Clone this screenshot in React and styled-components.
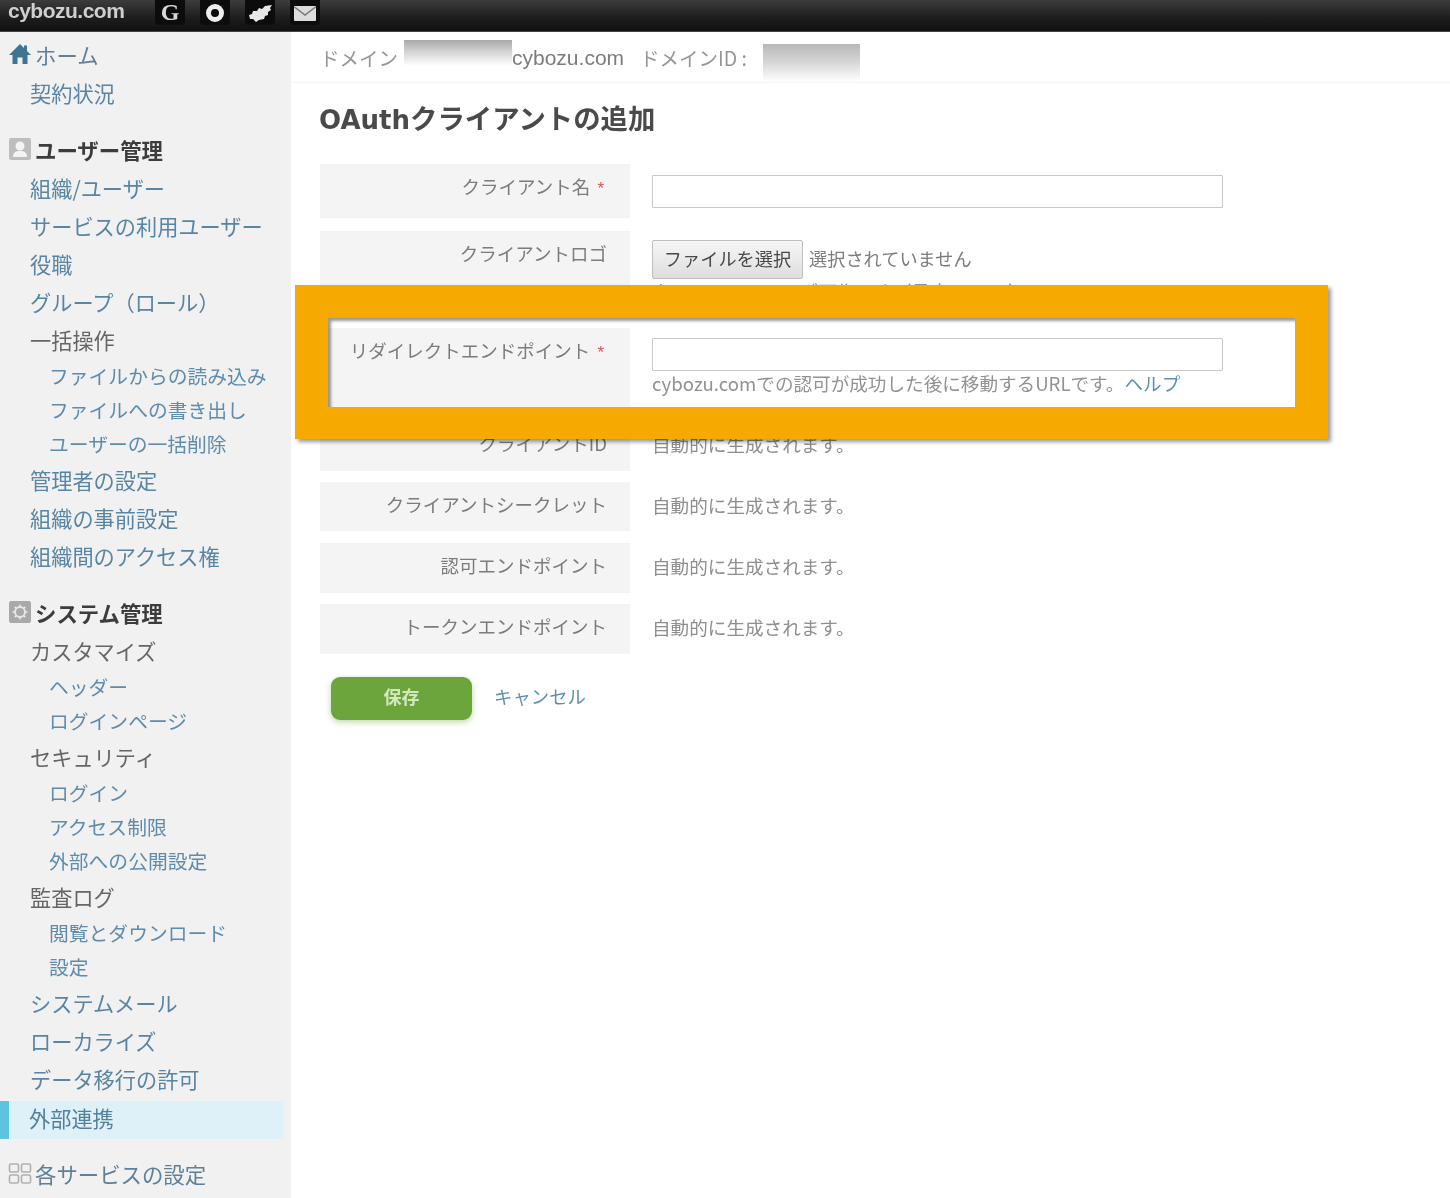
import React from "react";
import styled, { createGlobalStyle } from "styled-components";

const Global = createGlobalStyle`
  html, body { margin: 0; padding: 0; background: #fff; }
  * { box-sizing: border-box; }
  body { font-family: "Liberation Sans", "Noto Sans CJK JP", sans-serif; }
`;

const Page = styled.div`
  position: relative;
  width: 1450px;
  height: 1198px;
  overflow: hidden;
  background: #fff;
`;

const Header = styled.header`
  height: 32px;
  display: flex;
  align-items: flex-start;
  background: linear-gradient(#3c3c3c, #1c1c1c 60%, #111);
  border-bottom: 1px solid #444;
  filter: blur(0.7px);
`;

const Logo = styled.div`
  width: 155px;
  padding: 0 0 0 8px;
  height: 24px;
  line-height: 22px;
  font-size: 21px;
  font-weight: 700;
  color: #cfcfcf;
  letter-spacing: -0.5px;
`;

const HeaderIcons = styled.div`
  display: flex;
  gap: 15px;
`;

const HeaderIcon = styled.div`
  width: 30px;
  height: 25px;
  background: #0c0c0c;
  border-radius: 0 0 4px 4px;
  display: flex;
  align-items: center;
  justify-content: center;
  color: #d8d8d8;
  font: 700 24px/25px "Liberation Serif", serif;
`;

const Body = styled.div`
  display: grid;
  grid-template-columns: 291px 1fr;
  height: 1166px;
`;

const Sidebar = styled.nav`
  background: #f1f1f1;
  padding-top: 4px;
  overflow: hidden;
  filter: blur(0.7px);
  font-family: "Noto Sans CJK JP", sans-serif;
`;

const Section = styled.section`
  margin-bottom: 19px;
`;

const Heading = styled.div`
  height: 38px;
  padding: 0 0 2px 8px;
  display: flex;
  align-items: center;
  gap: 3px;
  font-size: 21.4px;
  font-weight: ${(p) => (p.$light ? 400 : 700)};
  color: ${(p) => (p.$light ? "#5f8097" : "#3c3c3c")};
  white-space: nowrap;
`;

const Item = styled.div`
  height: 38px;
  line-height: 38px;
  padding-left: 30px;
  font-size: 21.2px;
  white-space: nowrap;
  color: ${(p) => (p.$plain ? "#666" : "#5885a3")};
`;

const ActiveItem = styled(Item)`
  width: 283px;
  margin: 3px 0 -3px;
  background: #dff1f8;
  border-left: 9px solid #5dc4df;
  padding-left: 20px;
  line-height: 33px;
  color: #55809c;
`;

const SubItem = styled.div`
  height: 34px;
  line-height: 33px;
  padding-left: 49px;
  font-size: 19.8px;
  white-space: nowrap;
  color: #5f8cab;
`;

const Main = styled.main`
  filter: blur(0.7px);
  font-family: "Noto Sans CJK JP", sans-serif;
`;

const DomainBar = styled.div`
  height: 51px;
  padding: 7px 0 0 29px;
  display: flex;
  align-items: flex-start;
  border-bottom: 1px solid #f6f6f6;
  font-size: 19.5px;
  line-height: 38px;
  color: #969696;
  white-space: nowrap;
`;

const DomainName = styled.span`
  font-family: "Liberation Sans", sans-serif;
  font-size: 21px;
  color: #7c7c7c;
  margin-right: 16px;
`;

const Redact = styled.span`
  display: block;
  width: ${(p) => p.$w}px;
  height: ${(p) => p.$h}px;
  margin: ${(p) => p.$m};
  background: linear-gradient(${(p) => p.$from}, #d4d4d4 45%, #fff);
`;

const Content = styled.div`
  padding: 0 0 0 29px;
`;

const Title = styled.h1`
  margin: 0 0 0 -1px;
  padding-top: 16px;
  height: 81px;
  font-size: 27.4px;
  line-height: 36px;
  font-weight: 700;
  color: #4a4a4a;
  white-space: nowrap;
`;

const TitleLatin = styled.span`
  font-family: "DejaVu Sans", sans-serif;
  font-size: 26px;
`;

const Row = styled.div`
  display: grid;
  grid-template-columns: 310px 1fr;
  column-gap: 22px;
  min-height: ${(p) => p.$h}px;
  margin-bottom: ${(p) => p.$gap ?? 12}px;
`;

const Label = styled.div`
  background: #f4f4f4;
  text-align: right;
  padding: 10px 23px 0 0;
  font-size: 18.5px;
  line-height: 25px;
  color: #7c7c7c;
  white-space: nowrap;
`;

const Required = styled.span`
  color: #d9534f;
  margin: 0 3px 0 7px;
  font-family: "Liberation Sans", sans-serif;
  font-size: 17px;
`;

const Cell = styled.div`
  padding-top: ${(p) => p.$top ?? 0}px;
  font-size: 18.6px;
  color: #8e8e8e;
`;

const TextInput = styled.input`
  display: block;
  width: 571px;
  height: 33px;
  background: #fff;
  border: 1.5px solid #c8c8c8;
  border-radius: 1px;
`;

const FileLine = styled.div`
  display: flex;
  align-items: center;
  gap: 6px;
  color: #7c7c7c;
  font-size: 18.2px;
`;

const FileStatus = styled.span`
  padding-bottom: 4px;
`;

const FileButton = styled.button`
  width: 151px;
  height: 39px;
  padding: 0 0 4px;
  background: linear-gradient(#f6f6f6, #dedede);
  border: 1px solid #c0c0c0;
  border-radius: 2px;
  font: 400 18.2px "Noto Sans CJK JP", sans-serif;
  color: #484848;
  white-space: nowrap;
`;

const Help = styled.div`
  font-size: 18.6px;
  line-height: 24px;
  color: #929292;
  white-space: nowrap;
`;

const Link = styled.a`
  color: #5d90b0;
`;

const Plain = styled.div`
  line-height: 25px;
`;

const Actions = styled.div`
  display: flex;
  align-items: center;
  gap: 22px;
  margin: 23px 0 0 11px;
`;

const SaveButton = styled.button`
  width: 141px;
  height: 43px;
  padding: 0 0 6px;
  background: #6ba53c;
  border: 0;
  border-radius: 9px;
  box-shadow: 0 2px 6px rgba(107, 165, 60, 0.45);
  font: 700 18px "Noto Sans CJK JP", sans-serif;
  color: #d4e8c0;
`;

const Cancel = styled.a`
  padding-bottom: 5px;
  font-size: 18.4px;
  color: #5d90b0;
`;

const Highlight = styled.div`
  position: absolute;
  left: 295px;
  top: 285px;
  width: 1033px;
  height: 154px;
  border: solid #f6a900;
  border-width: 33px 33px 32px 33px;
  box-shadow: 3px 3px 4px rgba(0, 0, 0, 0.4), inset 3px 3px 3px rgba(0, 0, 0, 0.4);
`;

const HomeIcon = () => (
  <svg width="24" height="24" viewBox="0 0 24 24">
    <path d="M12 2 L16 6 V3.5 H19 V9 L23 13 H19.5 V22 H14.5 V15.5 H9.5 V22 H4.5 V13 H1 Z" fill="#3f7492" />
  </svg>
);
const UserIcon = () => (
  <svg width="24" height="24" viewBox="0 0 24 24">
    <rect x="1" y="1" width="22" height="22" rx="2" fill="#bdbdbd" />
    <circle cx="12" cy="9" r="4.5" fill="#f4f4f4" />
    <path d="M5 20 C5 15 8 14 12 14 S19 15 19 20 Z" fill="#f4f4f4" />
  </svg>
);
const GearIcon = () => (
  <svg width="24" height="24" viewBox="0 0 24 24">
    <rect x="1" y="1" width="22" height="22" rx="2" fill="#a9a9a9" />
    <circle cx="12" cy="12" r="5" fill="none" stroke="#e6e6e6" strokeWidth="2" />
    <path d="M12 4.5 V7 M12 17 V19.5 M4.5 12 H7 M17 12 H19.5 M6.8 6.8 L8.5 8.5 M15.5 15.5 L17.2 17.2 M6.8 17.2 L8.5 15.5 M15.5 8.5 L17.2 6.8" stroke="#e6e6e6" strokeWidth="1.6" />
  </svg>
);
const GridIcon = () => (
  <svg width="24" height="24" viewBox="0 0 24 24" fill="none" stroke="#b0b0b0" strokeWidth="1.6">
    <rect x="1.5" y="3" width="9" height="8" rx="1.5" />
    <rect x="13.5" y="3" width="9" height="8" rx="1.5" />
    <rect x="1.5" y="14" width="9" height="8" rx="1.5" />
    <rect x="13.5" y="14" width="9" height="8" rx="1.5" />
  </svg>
);
const RingIcon = () => (
  <svg width="24" height="24" viewBox="0 0 24 24">
    <circle cx="12" cy="12" r="6.5" fill="none" stroke="#ededed" strokeWidth="5" />
  </svg>
);
const CloudIcon = () => (
  <svg width="26" height="20" viewBox="0 0 26 20">
    <path d="M2 12 L5 11 L6 8 L10 8 L12 5 L15 6 L18 3 L25 2 L23 5 L24 7 L21 9 L21 12 L18 13 L17 16 L12 17 L9 19 L6 16 L3 16 Z" fill="#e8e8e8" />
  </svg>
);
const MailIcon = () => (
  <svg width="24" height="20" viewBox="0 0 24 20">
    <rect x="1" y="3" width="22" height="15" rx="1" fill="#dcdcdc" />
    <path d="M1.5 4 L12 12 L22.5 4" fill="none" stroke="#777" strokeWidth="1.5" />
  </svg>
);

const nav = [
  { key: "home", items: [["h", "ホーム", HomeIcon, true], ["i", "契約状況"]] },
  {
    key: "user",
    items: [
      ["h", "ユーザー管理", UserIcon], ["i", "組織/ユーザー"], ["i", "サービスの利用ユーザー"], ["i", "役職"],
      ["i", "グループ（ロール）"], ["p", "一括操作"], ["s", "ファイルからの読み込み"], ["s", "ファイルへの書き出し"],
      ["s", "ユーザーの一括削除"], ["i", "管理者の設定"], ["i", "組織の事前設定"], ["i", "組織間のアクセス権"],
    ],
  },
  {
    key: "system",
    items: [
      ["h", "システム管理", GearIcon], ["p", "カスタマイズ"], ["s", "ヘッダー"], ["s", "ログインページ"], ["p", "セキュリティ"],
      ["s", "ログイン"], ["s", "アクセス制限"], ["s", "外部への公開設定"], ["p", "監査ログ"], ["s", "閲覧とダウンロード"], ["s", "設定"],
      ["i", "システムメール"], ["i", "ローカライズ"], ["i", "データ移行の許可"], ["a", "外部連携"],
    ],
  },
  { key: "svc", items: [["h", "各サービスの設定", GridIcon, true]] },
];

const renderNav = ([kind, text, Icon, light]) => {
  if (kind === "h") return <Heading key={text} $light={light}><Icon />{text}</Heading>;
  if (kind === "s") return <SubItem key={text}>{text}</SubItem>;
  if (kind === "a") return <ActiveItem key={text}>{text}</ActiveItem>;
  return <Item key={text} $plain={kind === "p"}>{text}</Item>;
};

const autoRows = [
  ["クライアントシークレット", 49, 12],
  ["認可エンドポイント", 50, 11],
  ["トークンエンドポイント", 50, 0],
];

export default function App() {
  return (
    <Page>
      <Global />
      <Header>
        <Logo>cybozu.com</Logo>
        <HeaderIcons>
          <HeaderIcon>G</HeaderIcon>
          <HeaderIcon><RingIcon /></HeaderIcon>
          <HeaderIcon><CloudIcon /></HeaderIcon>
          <HeaderIcon><MailIcon /></HeaderIcon>
        </HeaderIcons>
      </Header>
      <Body>
        <Sidebar>
          {nav.map((s) => <Section key={s.key}>{s.items.map(renderNav)}</Section>)}
        </Sidebar>
        <Main>
          <DomainBar>
            ドメイン
            <Redact $w={108} $h={26} $m="1px 0 0 6px" $from="#a8a8a8" />
            <DomainName>cybozu.com</DomainName>
            ドメインID :
            <Redact $w={97} $h={38} $m="5px 0 0 16px" $from="#b8b8b8" />
          </DomainBar>
          <Content>
            <Title><TitleLatin>OAuth</TitleLatin>クライアントの追加</Title>
            <Row $h={54} $gap={13}>
              <Label>クライアント名<Required>*</Required></Label>
              <Cell $top={11}><TextInput /></Cell>
            </Row>
            <Row $h={85}>
              <Label>クライアントロゴ</Label>
              <Cell $top={9}>
                <FileLine>
                  <FileButton>ファイルを選択</FileButton>
                  <FileStatus>選択されていません</FileStatus>
                </FileLine>
                <Help>クライアントのロゴ画像です（最大 200KB）</Help>
              </Cell>
            </Row>
            <Row $h={81}>
              <Label>リダイレクトエンドポイント<Required>*</Required></Label>
              <Cell $top={10}>
                <TextInput />
                <Help>cybozu.comでの認可が成功した後に移動するURLです。<Link>ヘルプ</Link></Help>
              </Cell>
            </Row>
            <Row $h={50} $gap={11}>
              <Label>クライアントID</Label>
              <Cell $top={10}><Plain>自動的に生成されます。</Plain></Cell>
            </Row>
            {autoRows.map(([label, h, gap]) => (
              <Row key={label} $h={h} $gap={gap}>
                <Label>{label}</Label>
                <Cell $top={10}><Plain>自動的に生成されます。</Plain></Cell>
              </Row>
            ))}
            <Actions>
              <SaveButton>保存</SaveButton>
              <Cancel>キャンセル</Cancel>
            </Actions>
          </Content>
        </Main>
      </Body>
      <Highlight />
    </Page>
  );
}
